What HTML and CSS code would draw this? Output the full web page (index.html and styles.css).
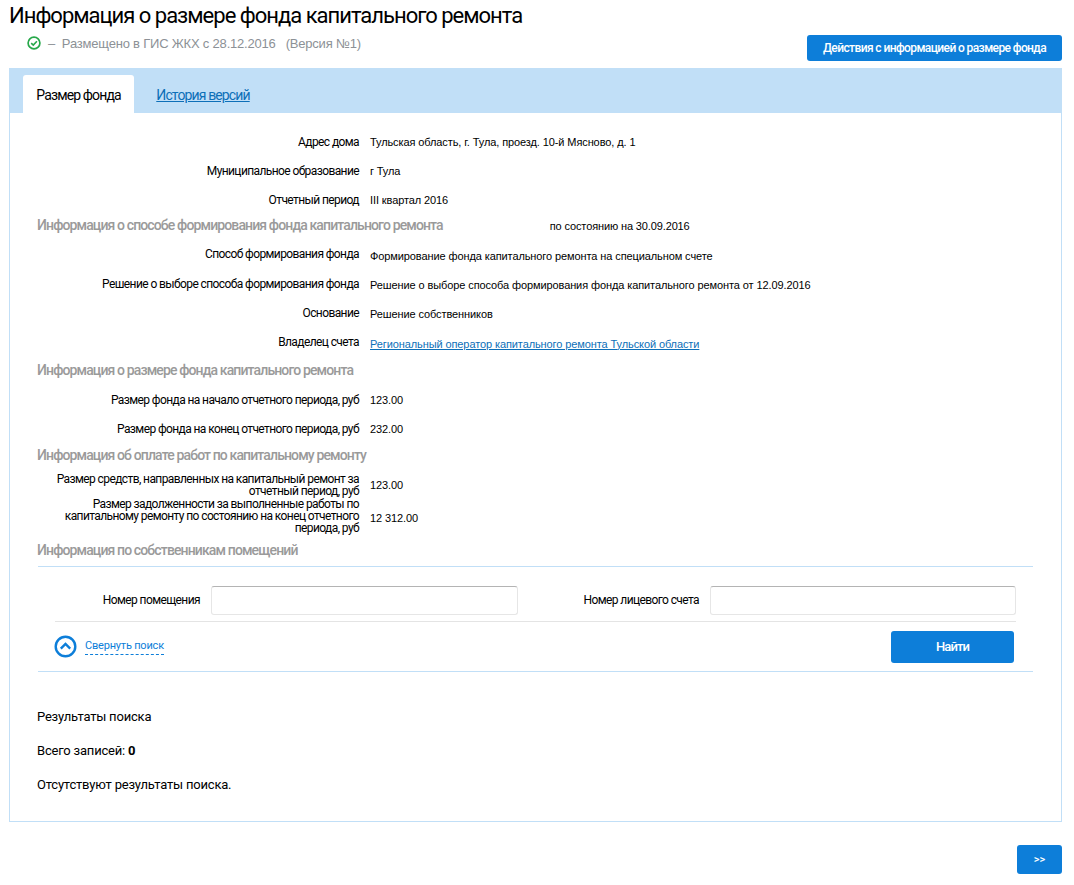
FILE: index.html
```html
<!DOCTYPE html>
<html lang="ru">
  <head>
    <meta charset="UTF-8" />
    <title>Информация о размере фонда капитального ремонта</title>
    <link rel="stylesheet" href="styles.css">
  </head>
  <body>
    <div class="page-head">
      <div class="head-left">
        <h1 class="title">Информация о размере фонда капитального ремонта</h1>
        <div class="status">
          <svg class="status-icon" width="14" height="14" viewBox="0 0 14 14">
            <circle cx="7" cy="7" r="5.9" fill="none" stroke="#27a84a" stroke-width="1.7" />
            <path d="M4.2 7.1 6.3 9.1 9.9 5.3" fill="none" stroke="#27a84a" stroke-width="1.6" />
          </svg>
          <span>–&nbsp; Размещено в ГИС ЖКХ с 28.12.2016</span>
          <span class="version">(Версия №1)</span>
        </div>
      </div>
      <button class="btn btn-actions">Действия с информацией о размере фонда</button>
    </div>

    <div class="panel">
      <div class="tabs">
        <div class="tab active">Размер фонда</div>
        <a class="tab tab-link" href="#">История версий</a>
      </div>

      <div class="panel-body">
        <div class="row"><div class="label">Адрес дома</div><div class="value">Тульская область, г. Тула, проезд. 10-й Мясново, д. 1</div></div>
        <div class="row"><div class="label">Муниципальное образование</div><div class="value">г Тула</div></div>
        <div class="row"><div class="label">Отчетный период</div><div class="value">III квартал 2016</div></div>

        <div class="section section-way">
          <span>Информация о способе формирования фонда капитального ремонта</span>
          <span class="as-of">по состоянию на 30.09.2016</span>
        </div>
        <div class="row row-low"><div class="label">Способ формирования фонда</div><div class="value">Формирование фонда капитального ремонта на специальном счете</div></div>
        <div class="row row-low"><div class="label">Решение о выборе способа формирования фонда</div><div class="value">Решение о выборе способа формирования фонда капитального ремонта от 12.09.2016</div></div>
        <div class="row row-low"><div class="label">Основание</div><div class="value">Решение собственников</div></div>
        <div class="row row-low"><div class="label">Владелец счета</div><div class="value"><a href="#">Региональный оператор капитального ремонта Тульской области</a></div></div>

        <div class="section section-size">Информация о размере фонда капитального ремонта</div>
        <div class="row"><div class="label">Размер фонда на начало отчетного периода, руб</div><div class="value">123.00</div></div>
        <div class="row"><div class="label">Размер фонда на конец отчетного периода, руб</div><div class="value">232.00</div></div>

        <div class="section section-pay">Информация об оплате работ по капитальному ремонту</div>
        <div class="row row-two"><div class="label">Размер средств, направленных на капитальный ремонт за отчетный период, руб</div><div class="value">123.00</div></div>
        <div class="row row-three"><div class="label">Размер задолженности за выполненные работы по капитальному ремонту по состоянию на конец отчетного периода, руб</div><div class="value">12 312.00</div></div>

        <div class="section section-owners">Информация по собственникам помещений</div>

        <div class="search">
          <div class="search-fields">
            <label class="field field-room">
              <span class="field-label">Номер помещения</span>
              <input type="text" />
            </label>
            <label class="field field-account">
              <span class="field-label">Номер лицевого счета</span>
              <input type="text" />
            </label>
          </div>
          <div class="search-actions">
            <a class="collapse" href="#">
              <svg width="23" height="23" viewBox="0 0 23 23">
                <circle cx="11.5" cy="11.5" r="9.8" fill="none" stroke="#0d7ed9" stroke-width="2.4" />
                <path d="M6.8 13.6 11.5 9l4.7 4.6" fill="none" stroke="#0d7ed9" stroke-width="2.4" />
              </svg>
              <span>Свернуть поиск</span>
            </a>
            <button class="btn btn-find">Найти</button>
          </div>
        </div>

        <div class="results">
          <p>Результаты поиска</p>
          <p>Всего записей: <b>0</b></p>
          <p>Отсутствуют результаты поиска.</p>
        </div>
      </div>
    </div>

    <div class="page-foot">
      <button class="btn btn-next">&gt;&gt;</button>
    </div>
  </body>
</html>
```

FILE: styles.css
```css
body {
  margin: 0;
  padding: 0 12px 0 9px;
  background-color: #fff;
  color: #000;
  font-family: "Liberation Sans", Arial, sans-serif;
  font-size: 11px;
}

/* Header */

.page-head {
  display: flex;
  justify-content: space-between;
  align-items: flex-end;
  height: 61px;
}

.title {
  margin: 0;
  padding-top: 3px;
  font-family: Roboto, sans-serif;
  font-size: 22px;
  font-weight: 400;
  line-height: 26px;
  letter-spacing: -1px;
}

.status {
  display: flex;
  align-items: center;
  height: 20px;
  margin-top: 4px;
  margin-bottom: 8px;
  padding-left: 18px;
  color: #8c9196;
  font-size: 13px;
  letter-spacing: -0.2px;
}

.status-icon {
  margin-right: 7px;
}

.version {
  margin-left: 10px;
}

.btn {
  border: none;
  border-radius: 3px;
  background-color: #0d7ed9;
  color: #fff;
  font-family: Roboto, sans-serif;
  font-size: 12px;
  font-weight: 500;
  cursor: pointer;
}

.btn-actions {
  width: 255px;
  height: 26px;
  letter-spacing: -0.6px;
}

/* Panel and tabs */

.panel {
  margin-top: 7px;
  border: 1px solid #c1dff7;
  border-top: none;
}

.tabs {
  display: flex;
  height: 45px;
  margin: 0 -1px;
  padding: 7px 0 0 14px;
  box-sizing: border-box;
  background-color: #c1dff7;
}

.tab {
  width: 111px;
  line-height: 40px;
  text-align: center;
  font-family: Roboto, sans-serif;
  font-size: 14px;
  letter-spacing: -0.87px;
}

.tab.active {
  border-radius: 3px 3px 0 0;
  background-color: #fff;
}

.tab-link {
  width: 138px;
  color: #0d6fb8;
}

.panel-body {
  padding: 14px 28px 0 27px;
}

/* Rows */

.row {
  display: flex;
  align-items: center;
  height: 29.4px;
}

.label {
  width: 322px;
  margin-right: 11px;
  flex-shrink: 0;
  text-align: right;
  font-family: Roboto, sans-serif;
  font-size: 12px;
  line-height: 12px;
  letter-spacing: -0.6px;
}

.value {
  letter-spacing: -0.1px;
}

.value a {
  color: #0d6fb8;
}

.row-low .value {
  padding-top: 3px;
}

.row-two {
  height: 25px;
}

.row-three {
  height: 37.5px;
}

.row-three .value {
  padding-top: 3px;
}

.section {
  color: #9a9a9a;
  font-family: Roboto, sans-serif;
  font-size: 14px;
  font-weight: 500;
  line-height: 22px;
  letter-spacing: -0.87px;
}

.section-way {
  display: flex;
  height: 25.3px;
  margin-top: -1px;
}

.section-size {
  height: 26.3px;
  margin-top: 2px;
}

.section-pay {
  height: 28.5px;
}

.section-owners {
  height: 27px;
  margin-top: 4px;
}

.as-of {
  margin-left: 107px;
  padding-top: 1px;
  color: #000;
  font-family: "Liberation Sans", Arial, sans-serif;
  font-size: 11px;
  font-weight: 400;
  letter-spacing: -0.13px;
}

/* Search form */

.search {
  margin-left: 1px;
  border-top: 1px solid #c1dff7;
  border-bottom: 1px solid #c1dff7;
}

.search-fields {
  display: flex;
  height: 55px;
  margin: 0 17px;
  padding-top: 18px;
  box-sizing: border-box;
  border-bottom: 1px solid #e4e4e4;
}

.field {
  display: flex;
  align-items: center;
  height: 30px;
}

.field-room {
  width: 463px;
}

.field-account {
  margin-left: 65px;
}

.field-label {
  margin-right: 11px;
  text-align: right;
  font-family: Roboto, sans-serif;
  font-size: 12px;
  letter-spacing: -0.6px;
}

.field-room .field-label {
  width: 145px;
}

.field-account .field-label {
  width: 116px;
}

.field input {
  width: 307px;
  height: 29px;
  padding: 0;
  box-sizing: border-box;
  border: 1px solid #e6e6e6;
  border-top: 1px solid #b4b4b4;
  border-radius: 3px;
  background-color: #fff;
}

.field-account input {
  width: 306px;
}

.search-actions {
  display: flex;
  justify-content: space-between;
  align-items: center;
  height: 49px;
  padding: 0 19px 0 16px;
}

.collapse {
  display: flex;
  align-items: center;
  color: #0d7ed9;
  font-family: Roboto, sans-serif;
  font-size: 11px;
  letter-spacing: -0.2px;
  text-decoration: none;
}

.collapse span {
  margin-left: 8px;
  padding-bottom: 2px;
  border-bottom: 1px dashed #0d7ed9;
}

.btn-find {
  width: 123px;
  height: 32px;
  font-size: 13px;
  letter-spacing: -0.9px;
}

/* Results */

.results {
  padding-top: 37px;
  height: 112px;
  font-family: Roboto, sans-serif;
  font-size: 13px;
  letter-spacing: -0.2px;
}

.results p {
  margin: 0 0 18px;
  line-height: 16px;
}

/* Footer */

.page-foot {
  display: flex;
  justify-content: flex-end;
  padding-top: 23px;
}

.btn-next {
  width: 45px;
  height: 29px;
  font-size: 11px;
}
```
